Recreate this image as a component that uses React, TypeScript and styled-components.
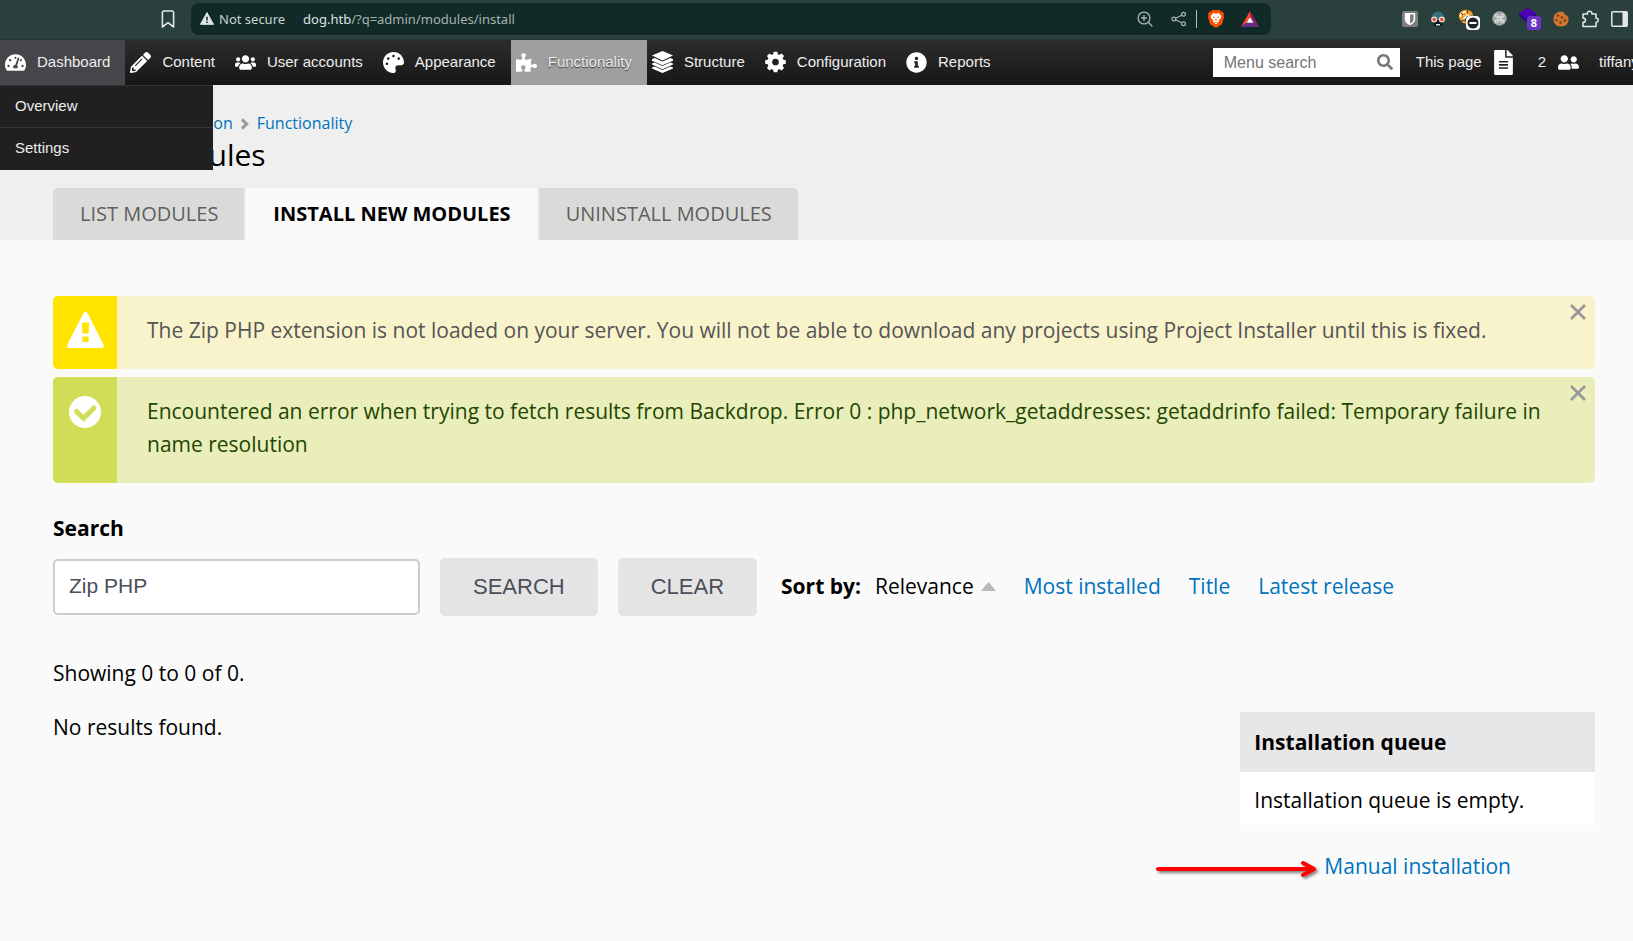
import React from "react";
import styled, { createGlobalStyle, css } from "styled-components";
import {
  FaTachometerAlt,
  FaPencilAlt,
  FaUsers,
  FaPalette,
  FaPuzzlePiece,
  FaInfoCircle,
  FaSearch,
  FaFileAlt,
  FaUserFriends,
} from "react-icons/fa";

const sans = `"Liberation Sans", Arial, sans-serif`;
const openSans = `"Open Sans", "Noto Sans", sans-serif`;
const link = "#0074bd";

const GlobalStyle = createGlobalStyle`
  *, *::before, *::after { box-sizing: border-box; }
  body {
    margin: 0;
    background: #fafafa;
    color: #000;
    font: 21px/33px ${openSans};
  }
  button, input { font: inherit; margin: 0; }
  a { color: ${link}; text-decoration: none; }
  p, h1, h2, ul, ol { margin: 0; padding: 0; }
  ul, ol { list-style: none; }
  svg { display: block; flex: none; }
`;

/* ---------- browser toolbar ---------- */

const BrowserBar = styled.div`
  display: flex;
  align-items: center;
  height: 40px;
  padding: 3px 5px 5px 159px;
  background: #29403c;
  border-bottom: 1px solid #263431;
  color: #e4e9e8;
  font: 13px/20px "Noto Sans", sans-serif;
`;

const IconButton = styled.button`
  display: flex;
  align-items: center;
  justify-content: center;
  flex: none;
  padding: 0;
  border: 0;
  background: none;
  color: inherit;
`;

const AddressBar = styled.div`
  display: flex;
  align-items: center;
  flex: 1;
  min-width: 0;
  height: 32px;
  margin: 0 131px 0 14px;
  padding: 0 12px 0 9px;
  border-radius: 8px;
  background: #112a27;
`;

const SecurityLabel = styled.span`
  display: flex;
  align-items: center;
  gap: 5px;
  margin-right: 18px;
  color: #c9d3d1;
  white-space: nowrap;
`;

const Url = styled.span`
  flex: 1;
  color: #dbe3e1;
  white-space: nowrap;
  span { color: #a5b3b0; }
`;

const AddressTools = styled.div`
  display: flex;
  align-items: center;
  gap: 18px;
  color: #a9b9b6;
`;

const ShieldGroup = styled.div`
  display: flex;
  align-items: center;
  gap: 17px;
  margin-left: -9px;
  padding-left: 11px;
  border-left: 1px solid #b4c0be;
`;

const Extensions = styled.div`
  display: flex;
  align-items: center;
  gap: 12px;
`;

/* ---------- admin bar ---------- */

const AdminBar = styled.nav`
  position: relative;
  z-index: 2;
  display: flex;
  align-items: stretch;
  height: 45px;
  background: linear-gradient(#2c2c2c, #171717);
  color: #eee;
  font: 15px/20px ${sans};
`;

const MenuList = styled.ul`
  display: flex;
`;

const MenuItem = styled.li`
  position: relative;
  display: flex;
`;

const MenuLink = styled.a<{ $state?: "hover" | "active" }>`
  display: flex;
  align-items: center;
  gap: 11px;
  padding: 0 15px 1px 5px;
  color: #eee;
  white-space: nowrap;
  svg { color: #fff; }
  ${(p) => p.$state === "hover" && css`background: #46464a;`}
  ${(p) =>
    p.$state === "active" &&
    css`
      background: #9f9f9f;
      text-shadow: 0 1px 1px #333;
    `}
`;

const SubMenu = styled.ul`
  position: absolute;
  top: 100%;
  left: 0;
  width: 213px;
  padding-bottom: 1px;
  background: #202020;
`;

const SubLink = styled.a`
  display: block;
  padding: 10px 15px 11px;
  border-top: 1px solid #333;
  color: #eee;
`;

const AdminTools = styled.div`
  display: flex;
  align-items: center;
  margin-left: auto;
  padding-bottom: 1px;
`;

const MenuSearch = styled.label`
  display: flex;
  align-items: center;
  width: 187px;
  height: 29px;
  padding: 0 7px 0 11px;
  background: #fff;
  color: #777;
`;

const MenuSearchInput = styled.input`
  flex: 1;
  min-width: 0;
  padding: 2px 0 0;
  border: 0;
  outline: 0;
  background: none;
  font: 16px/20px ${sans};
  &::placeholder { color: #757575; opacity: 1; }
`;

const ToolLink = styled.a`
  display: flex;
  align-items: center;
  gap: 12px;
  margin-left: 16px;
  color: #eee;
  white-space: nowrap;
  & + & { margin-left: 25px; }
  svg { color: #fff; }
`;

const PageIcon = styled(FaFileAlt)`
  width: 19px;
  height: 25px;
`;

const UserLink = styled.a`
  width: 34px;
  margin-left: 20px;
  overflow: hidden;
  color: #eee;
  white-space: nowrap;
`;

/* ---------- page header ---------- */

const PageHeader = styled.header`
  padding: 26px 38px 0 53px;
  background: #efefef;
`;

const Breadcrumb = styled.ol`
  display: flex;
  font-size: 16px;
  line-height: 24px;
  li { display: flex; align-items: center; }
  li + li::before {
    content: "";
    width: 8px;
    height: 8px;
    margin: 2px 10px 0 6px;
    border: solid #999;
    border-width: 3px 3px 0 0;
    transform: rotate(45deg);
  }
`;

const PageTitle = styled.h1`
  margin: 2px 0 15px;
  font-size: 30px;
  font-weight: 400;
  line-height: 36px;
`;

const Tabs = styled.ul`
  display: flex;
  gap: 2px;
`;

const Tab = styled.a<{ $current?: boolean }>`
  display: block;
  padding: 0 26px 0 27px;
  background: ${(p) => (p.$current ? "#fafafa" : "#dadad8")};
  color: ${(p) => (p.$current ? "#000" : "#5f5f5f")};
  font-size: 20px;
  font-weight: ${(p) => (p.$current ? 700 : 400)};
  line-height: 52px;
  text-transform: uppercase;
  li:first-child > & { border-top-left-radius: 5px; }
  li:last-child > & { border-top-right-radius: 5px; }
`;

/* ---------- content ---------- */

const Content = styled.main`
  padding: 56px 38px 40px 53px;
`;

const Messages = styled.div`
  display: grid;
  gap: 8px;
`;

const tones = {
  warning: { bar: "#ffe400", back: "#f9f3cb", text: "#555" },
  status: { bar: "#d1dd57", back: "#e9eebb", text: "#234600" },
};

const MessageBox = styled.div<{ $tone: keyof typeof tones }>`
  display: flex;
  position: relative;
  overflow: hidden;
  border-radius: 5px;
  background: ${(p) => tones[p.$tone].back};
  color: ${(p) => tones[p.$tone].text};
`;

const MessageIcon = styled.div<{ $tone: keyof typeof tones }>`
  flex: none;
  display: flex;
  justify-content: center;
  width: 64px;
  padding-top: 16px;
  background: ${(p) => tones[p.$tone].bar};
`;

const MessageText = styled.p`
  flex: 1;
  padding: 18px 34px 22px 30px;
`;

const CloseButton = styled(IconButton)`
  position: absolute;
  top: 8px;
  right: 9px;
  color: #999;
`;

const SearchLabel = styled.label`
  display: block;
  margin-top: 29px;
  font-weight: 700;
`;

const FilterRow = styled.div`
  display: flex;
  align-items: center;
  flex-wrap: wrap;
  margin-top: 13px;
`;

const SearchInput = styled.input`
  width: 367px;
  height: 56px;
  padding: 0 14px 2px;
  border: 2px solid #ccc;
  border-radius: 5px;
  background: #fff;
  color: #4a4f5a;
  font: 21px/33px ${sans};
`;

const FormButton = styled.button`
  height: 58px;
  margin-left: 20px;
  padding: 0 33px 2px;
  border: 0;
  border-radius: 5px;
  background: #e4e4e4;
  color: #4a4f5a;
  font: 22px/33px ${sans};
  text-transform: uppercase;
`;

const SortBar = styled.div`
  display: flex;
  gap: 14px;
  margin-left: 24px;
  padding-bottom: 1px;
`;

const SortList = styled.ul`
  display: flex;
  gap: 28px;
`;

const SortLink = styled.a<{ $current?: boolean }>`
  display: flex;
  align-items: center;
  gap: 7px;
  color: ${(p) => (p.$current ? "#000" : link)};
`;

const Summary = styled.p`
  margin: 41px 0 21px;
`;

const Results = styled.div`
  display: flex;
  justify-content: space-between;
  align-items: flex-start;
`;

const Queue = styled.aside`
  width: 23%;
`;

const QueueTitle = styled.h2`
  margin-top: 1px;
  padding: 0 14px;
  background: #e7e7e7;
  font-size: 21px;
  line-height: 60px;
`;

const QueueBody = styled.p`
  padding: 12px 14px 8px;
  background: #fff;
`;

const ManualInstall = styled.div`
  display: flex;
  justify-content: center;
  margin-top: 25px;
  a { position: relative; }
  svg {
    position: absolute;
    right: 100%;
    top: 6px;
    margin-right: 2px;
  }
`;

/* ---------- icons ---------- */

const LayersIcon = () => (
  <svg width="21" height="22" viewBox="0 0 21 22" fill="#fff">
    <path d="M10.5 0 21 4.6 10.5 9.4 0 4.6z" />
    <path d="M0 8.2 2.6 7 10.5 10.6 18.4 7 21 8.2v1.5L10.5 14.2 0 9.7z" />
    <path d="M0 12.6 2.6 11.5 10.5 15 18.4 11.5 21 12.6v1L10.5 18.2 0 13.600z" />
    <path d="M0 16.5 2.6 15.4 10.5 19 18.4 15.4 21 16.5v1L10.5 22 0 17.5z" />
  </svg>
);

const GearIcon = () => (
  <svg width="21" height="22" viewBox="-11 -11 22 22" fill="#fff">
    <circle r="6" fill="none" stroke="#fff" strokeWidth="5" />
    {[0, 45, 90, 135, 180, 225, 270, 315].map((a) => (
      <path key={a} d="M-2.600-7 -1.900-10.800h3.800L2.600-7z" transform={`rotate(${a})`} />
    ))}
  </svg>
);

const NotSecureIcon = () => (
  <svg width="14" height="13" viewBox="0 0 14 13">
    <path d="M7 .6 13.5 12.3H.5z" fill="#dfe5e4" stroke="#dfe5e4" strokeLinejoin="round" />
    <path d="M7 4.800v3.700M7 9.600v1.400" stroke="#112a27" strokeWidth="1.500" />
  </svg>
);

const BookmarkIcon = () => (
  <svg width="18" height="20" viewBox="0 0 18 20" fill="none" stroke="#e0e6e5" strokeWidth="1.600" strokeLinejoin="round">
    <path d="M5 2h8q1.600 0 1.600 1.600V18L9 13.600 3.400 18V3.600Q3.400 2 5 2z" />
  </svg>
);

const ZoomIcon = () => (
  <svg width="16" height="16" viewBox="0 0 16 16" fill="none" stroke="currentColor" strokeWidth="1.300" strokeLinecap="round">
    <circle cx="7" cy="7" r="5.900" />
    <path d="M11.300 11.300 15 15M7 4.500v5M4.500 7h5" />
  </svg>
);

const ShareIcon = () => (
  <svg width="16" height="16" viewBox="0 0 16 16" fill="none" stroke="currentColor" strokeWidth="1.200">
    <circle cx="2.800" cy="8" r="1.900" />
    <circle cx="12.500" cy="3.300" r="1.900" />
    <circle cx="12.500" cy="12.700" r="1.900" />
    <path d="m4.600 7.200 6-3M4.600 8.800l6 3" />
  </svg>
);

const BraveIcon = () => (
  <svg width="16" height="18" viewBox="0 0 16 18">
    <path d="M4.300 0h7.400l1.500 1.700 1.500.1 1.300 2.400-.6 1.300.6 1.500-2.100 7.300L8 18l-5.900-3.700L0 7l.6-1.500L0 4.200l1.300-2.400 1.500-.1z" fill="#fb5000" />
    <path d="M8 3.700 10.500 3l2.900 3-.8 2.500-2.100 1.700.5 1.600L8 14.600l-3-2.800.5-1.600-2.100-1.700L2.600 6l2.900-3z" fill="#fff" />
    <path d="m4.400 6.200 2.400.7-.6 1.400zM11.600 6.200l-2.400.7.600 1.400zM8 8l.8 2.200L8 11l-.8-.8zM6 11.600l2 .6 2-.6-2 1.800z" fill="#fb5000" />
  </svg>
);

const BatIcon = () => (
  <svg width="18" height="16" viewBox="0 0 18 16">
    <path d="M9 0v6L5.600 11.800 0 16z" fill="#ff4724" />
    <path d="M9 0 18 16l-5.600-4.200L9 6z" fill="#9e1f63" />
    <path d="M0 16l5.600-4.200h6.800L18 16z" fill="#662d91" />
    <path d="M9 6 12.400 11.800H5.600z" fill="#fff" />
  </svg>
);

const ShieldExtIcon = () => (
  <svg width="16" height="16" viewBox="0 0 16 16">
    <rect width="16" height="16" rx="2" fill="#7c7f7e" />
    <path d="M2.800 2h10.400v6.500c0 2.600-2.500 4.400-5.200 5.800-2.700-1.400-5.200-3.200-5.200-5.800z" fill="#fff" />
    <path d="M8 3.600h3.600v4.900c0 1.600-1.600 3-3.600 4z" fill="#7c7f7e" />
  </svg>
);

const RobotExtIcon = () => (
  <svg width="16" height="16" viewBox="0 0 16 16">
    <path d="M1.500 7q1-6.500 6.500-6.500T14.500 7v2h-13z" fill="#356f80" />
    <path d="M3.500 9h9v5l-4.500 2-4.500-2z" fill="#101a20" />
    <path d="M6 13h4v1.500H6z" fill="#d9e4e6" />
    <circle cx="4.200" cy="8.500" r="3" fill="#f3d9d2" />
    <circle cx="11.800" cy="8.500" r="3" fill="#f3d9d2" />
    <circle cx="4.200" cy="8.500" r="1.700" fill="#e0492f" />
    <circle cx="11.800" cy="8.500" r="1.700" fill="#e0492f" />
  </svg>
);

const FoxExtIcon = () => (
  <svg width="22" height="22" viewBox="0 0 22 22">
    <path d="M1 6Q4 1 10 2q5 1 5 6l-6-1-3 5 4 4-5-1Q0 11 1 6z" fill="#f2a12c" />
    <path d="M2 9q1-5 6-5M5 12l4-5 5 2" stroke="#fff" strokeWidth="1.300" fill="none" />
    <path d="M3 5l2 2M9 2l1 3M3 13l3-1" stroke="#4a2a10" strokeWidth="1" />
    <rect x="8" y="8" width="14" height="14" rx="4" fill="#fff" />
    <circle cx="15" cy="15" r="5.500" fill="#1c2427" />
    <path d="M11.500 15h7" stroke="#fff" strokeWidth="2" />
  </svg>
);

const CommandExtIcon = () => (
  <svg width="15" height="15" viewBox="0 0 15 15">
    <circle cx="7.500" cy="7.500" r="7.200" fill="#a3a7a6" />
    <path
      d="M6 6H4.900A1.400 1.400 0 1 1 6 4.700v5.600A1.400 1.400 0 1 1 4.900 9h5.200A1.400 1.400 0 1 1 9 10.300V4.700A1.400 1.400 0 1 1 10.100 6z"
      fill="none"
      stroke="#e9ecec"
    />
  </svg>
);

const PurpleExt = styled.span`
  position: relative;
  width: 22px;
  height: 22px;
`;

const CountBadge = styled.span`
  position: absolute;
  right: 0;
  bottom: 0;
  width: 14px;
  border-radius: 3px;
  background: #6a35c4;
  color: #fff;
  font: 700 11px/14px "Noto Sans", sans-serif;
  text-align: center;
`;

const CubeExtIcon = () => (
  <svg width="17" height="15" viewBox="0 0 17 15">
    <path d="M8.500 0 17 5 8.500 11 0 5z" fill="#4c00b8" />
    <path d="M0 5l8.500 6L17 5v4l-8.500 6L0 8.500z" fill="#2d0a80" />
  </svg>
);

const CookieExtIcon = () => (
  <svg width="16" height="16" viewBox="0 0 16 16">
    <path d="M7.500.5q3 0 4 2 .5 2 2.500 2 2 1.500 1.600 4.500-1 6.500-7.600 6.600Q.8 15.200.4 8.300.8 1.300 7.500.5z" fill="#d2752f" />
    <g fill="#7a3a1c">
      <circle cx="5" cy="4.500" r="1.200" />
      <circle cx="9" cy="6.500" r="1.300" />
      <circle cx="3.500" cy="9" r="1.200" />
      <circle cx="7.500" cy="11.500" r="1.300" />
      <circle cx="12" cy="9.500" r="1.200" />
    </g>
  </svg>
);

const PuzzleOutlineIcon = () => (
  <svg width="18" height="18" viewBox="0 0 18 18" fill="none" stroke="#e4e9e8" strokeWidth="1.500" strokeLinejoin="round">
    <path d="M2 4h4.500Q6 1.200 8.500 1.200T11 4h4v4.200q2.200-.2 2.200 1.900T15 12.200V16.500H2v-4.200q2.500 0 2.500-2.100T2 8z" />
  </svg>
);

const SidebarIcon = () => (
  <svg width="17" height="16" viewBox="0 0 17 16">
    <rect x=".8" y=".8" width="15.400" height="14.400" rx="1" fill="none" stroke="#e4e9e8" strokeWidth="1.500" />
    <path d="M11.500 1H16v14h-4.500z" fill="#e4e9e8" />
  </svg>
);

const WarningIcon = () => (
  <svg width="37" height="36" viewBox="0 0 37 36">
    <path
      fillRule="evenodd"
      fill="#fff"
      d="M16.300 1.400Q18.500-1.200 20.700 1.400L36.600 32.600Q37.300 36 34 36H3Q-.3 36 .4 32.600zM15 10.500 15.400 21.500h6.200L22 10.500zM15.400 24.500v5.500h6.200v-5.500z"
    />
  </svg>
);

const CheckIcon = () => (
  <svg width="32" height="38" viewBox="0 0 32 38">
    <circle cx="16" cy="19" r="16" fill="#fff" />
    <path d="m7.500 18.500 7 6.800 10.500-10.300" fill="none" stroke="#d1dd57" strokeWidth="5" strokeLinecap="round" />
  </svg>
);

const CloseIcon = () => (
  <svg width="16" height="16" viewBox="0 0 16 16" stroke="currentColor" strokeWidth="2.800">
    <path d="M1 1 15 15M15 1 1 15" />
  </svg>
);

const SortIcon = () => (
  <svg width="15" height="9" viewBox="0 0 15 9">
    <path d="M7.500 0 15 9H0z" fill="#b9b9b9" />
  </svg>
);

const ArrowIcon = () => (
  <svg width="166" height="24" viewBox="0 0 166 24" fill="none" strokeLinecap="round" strokeLinejoin="round">
    <defs>
      <filter id="arrow-shadow" x="-5%" y="-50%" width="115%" height="220%">
        <feDropShadow dx="2" dy="2" stdDeviation="1.500" floodColor="#000" floodOpacity=".5" />
      </filter>
    </defs>
    <g stroke="#f00" strokeWidth="4" filter="url(#arrow-shadow)">
      <path d="M2 13h154" />
      <path d="M147 7l11 6-11 6" />
    </g>
  </svg>
);

/* ---------- page ---------- */

const menu: { label: string; icon: React.ReactNode; state?: "hover" | "active"; children?: string[] }[] = [
  { label: "Dashboard", icon: <FaTachometerAlt size={21} />, state: "hover", children: ["Overview", "Settings"] },
  { label: "Content", icon: <FaPencilAlt size={21} /> },
  { label: "User accounts", icon: <FaUsers size={21} /> },
  { label: "Appearance", icon: <FaPalette size={21} /> },
  { label: "Functionality", icon: <FaPuzzlePiece size={21} />, state: "active" },
  { label: "Structure", icon: <LayersIcon /> },
  { label: "Configuration", icon: <GearIcon /> },
  { label: "Reports", icon: <FaInfoCircle size={21} /> },
];

function Message({ tone, children }: { tone: "warning" | "status"; children: React.ReactNode }) {
  return (
    <MessageBox $tone={tone} role="status">
      <MessageIcon $tone={tone}>{tone === "warning" ? <WarningIcon /> : <CheckIcon />}</MessageIcon>
      <MessageText>{children}</MessageText>
      <CloseButton type="button" aria-label="Dismiss">
        <CloseIcon />
      </CloseButton>
    </MessageBox>
  );
}

export default function App() {
  return (
    <>
      <GlobalStyle />
      <BrowserBar>
        <IconButton type="button" aria-label="Bookmark">
          <BookmarkIcon />
        </IconButton>
        <AddressBar>
          <SecurityLabel>
            <NotSecureIcon />
            Not secure
          </SecurityLabel>
          <Url>
            dog.htb<span>/?q=admin/modules/install</span>
          </Url>
          <AddressTools>
            <IconButton type="button" aria-label="Zoom"><ZoomIcon /></IconButton>
            <IconButton type="button" aria-label="Share"><ShareIcon /></IconButton>
            <ShieldGroup>
              <IconButton type="button" aria-label="Brave Shields"><BraveIcon /></IconButton>
              <IconButton type="button" aria-label="Rewards"><BatIcon /></IconButton>
            </ShieldGroup>
          </AddressTools>
        </AddressBar>
        <Extensions>
          <ShieldExtIcon />
          <RobotExtIcon />
          <FoxExtIcon />
          <CommandExtIcon />
          <PurpleExt>
            <CubeExtIcon />
            <CountBadge>8</CountBadge>
          </PurpleExt>
          <CookieExtIcon />
          <IconButton type="button" aria-label="Extensions"><PuzzleOutlineIcon /></IconButton>
          <IconButton type="button" aria-label="Sidebar"><SidebarIcon /></IconButton>
        </Extensions>
      </BrowserBar>

      <AdminBar>
        <MenuList>
          {menu.map((m) => (
            <MenuItem key={m.label}>
              <MenuLink href="#" $state={m.state}>
                {m.icon}
                {m.label}
              </MenuLink>
              {m.children && (
                <SubMenu>
                  {m.children.map((c) => (
                    <li key={c}>
                      <SubLink href="#">{c}</SubLink>
                    </li>
                  ))}
                </SubMenu>
              )}
            </MenuItem>
          ))}
        </MenuList>
        <AdminTools>
          <MenuSearch>
            <MenuSearchInput type="text" placeholder="Menu search" aria-label="Menu search" />
            <FaSearch size={16} />
          </MenuSearch>
          <ToolLink href="#">
            This page
            <PageIcon />
          </ToolLink>
          <ToolLink href="#">
            2
            <FaUserFriends size={21} />
          </ToolLink>
          <UserLink href="#">tiffany</UserLink>
        </AdminTools>
      </AdminBar>

      <PageHeader>
        <Breadcrumb>
          <li><a href="#">Home</a></li>
          <li><a href="#">Administration</a></li>
          <li><a href="#">Functionality</a></li>
        </Breadcrumb>
        <PageTitle>Install modules</PageTitle>
        <Tabs>
          <li><Tab href="#">List modules</Tab></li>
          <li><Tab href="#" $current>Install new modules</Tab></li>
          <li><Tab href="#">Uninstall modules</Tab></li>
        </Tabs>
      </PageHeader>

      <Content>
        <Messages>
          <Message tone="warning">
            The Zip PHP extension is not loaded on your server. You will not be able to download any projects using
            Project Installer until this is fixed.
          </Message>
          <Message tone="status">
            Encountered an error when trying to fetch results from Backdrop. Error 0 : php_network_getaddresses:
            getaddrinfo failed: Temporary failure in name resolution
          </Message>
        </Messages>

        <SearchLabel htmlFor="search">Search</SearchLabel>
        <FilterRow>
          <SearchInput id="search" type="text" defaultValue="Zip PHP" />
          <FormButton type="button">Search</FormButton>
          <FormButton type="button">Clear</FormButton>
          <SortBar>
            <strong>Sort by:</strong>
            <SortList>
              <li><SortLink href="#" $current>Relevance <SortIcon /></SortLink></li>
              <li><SortLink href="#">Most installed</SortLink></li>
              <li><SortLink href="#">Title</SortLink></li>
              <li><SortLink href="#">Latest release</SortLink></li>
            </SortList>
          </SortBar>
        </FilterRow>

        <Summary>Showing 0 to 0 of 0.</Summary>
        <Results>
          <p>No results found.</p>
          <Queue>
            <QueueTitle>Installation queue</QueueTitle>
            <QueueBody>Installation queue is empty.</QueueBody>
            <ManualInstall>
              <a href="#">
                <ArrowIcon />
                Manual installation
              </a>
            </ManualInstall>
          </Queue>
        </Results>
      </Content>
    </>
  );
}
